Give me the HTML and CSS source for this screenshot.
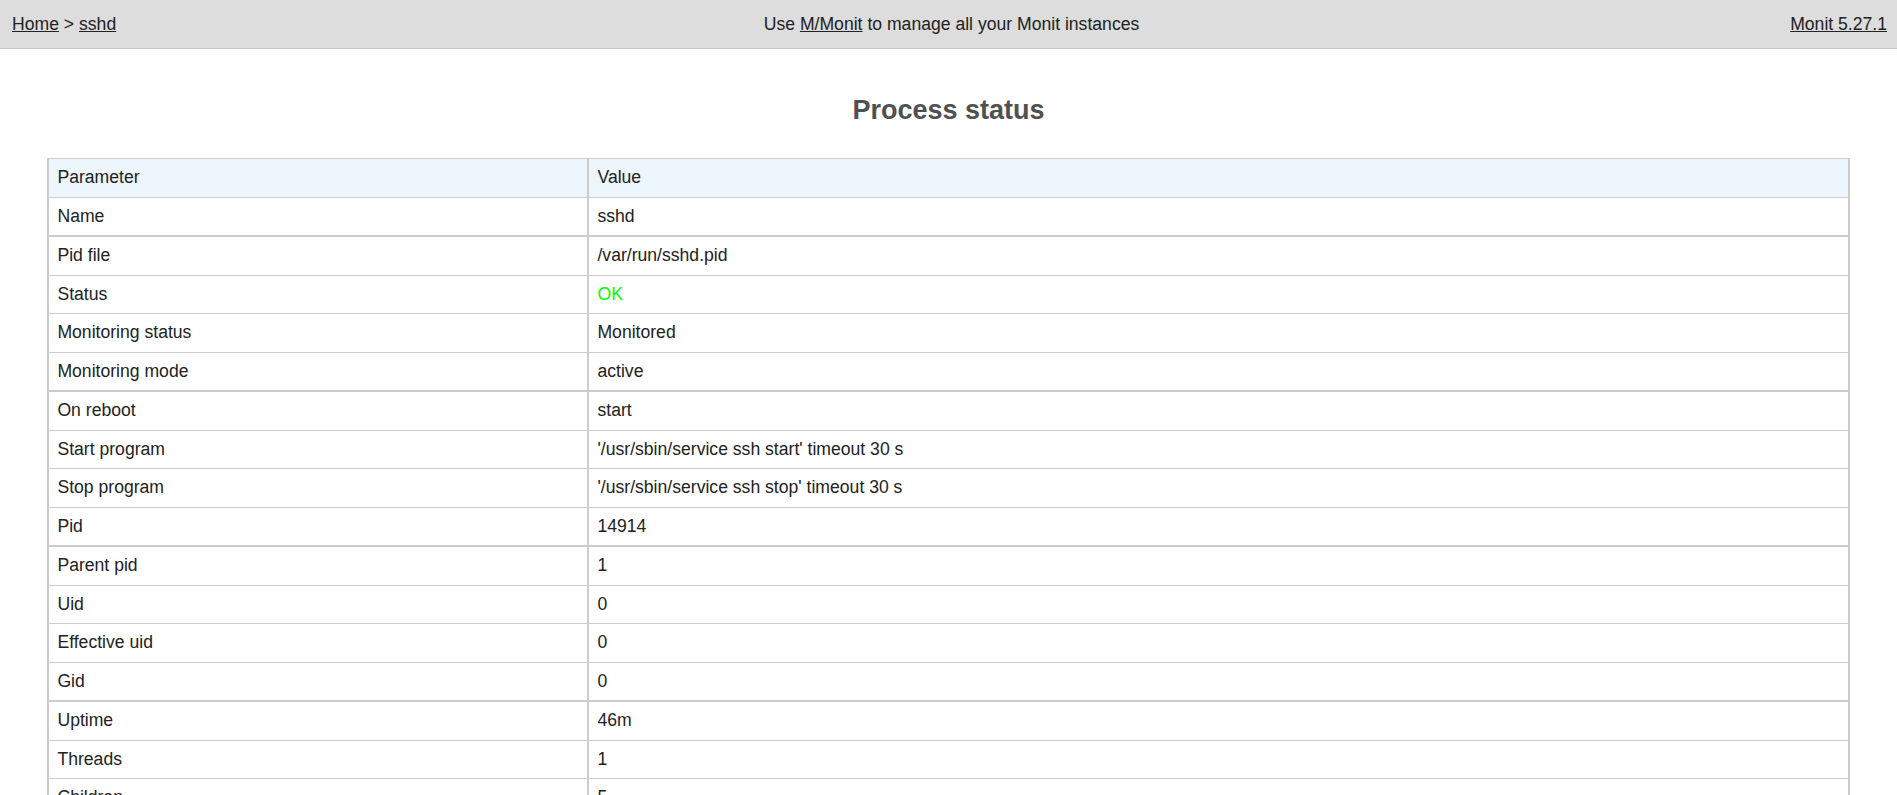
FILE: index.html
```html
<!DOCTYPE html>
<html lang="en">
<head>
    <meta charset="UTF-8">
    <meta name="viewport" content="width=device-width, initial-scale=1.0">
    <title>Monit: sshd</title>
    <link rel="stylesheet" href="styles.css">
</head>
<body>
    <div class="header">
        <div class="nav-left"><a href="#">Home</a> &gt; <a href="#">sshd</a></div>
        <div class="nav-center">Use <a href="#">M/Monit</a> to manage all your Monit instances</div>
        <div class="nav-right"><a href="#">Monit 5.27.1</a></div>
    </div>

    <h2 class="title">Process status</h2>

    <table class="status-table">
        <thead>
            <tr><th>Parameter</th><th>Value</th></tr>
        </thead>
        <tbody>
            <tr><td>Name</td><td>sshd</td></tr>
            <tr><td>Pid file</td><td>/var/run/sshd.pid</td></tr>
            <tr><td>Status</td><td class="green-text">OK</td></tr>
            <tr><td>Monitoring status</td><td>Monitored</td></tr>
            <tr><td>Monitoring mode</td><td>active</td></tr>
            <tr><td>On reboot</td><td>start</td></tr>
            <tr><td>Start program</td><td>'/usr/sbin/service ssh start' timeout 30 s</td></tr>
            <tr><td>Stop program</td><td>'/usr/sbin/service ssh stop' timeout 30 s</td></tr>
            <tr><td>Pid</td><td>14914</td></tr>
            <tr><td>Parent pid</td><td>1</td></tr>
            <tr><td>Uid</td><td>0</td></tr>
            <tr><td>Effective uid</td><td>0</td></tr>
            <tr><td>Gid</td><td>0</td></tr>
            <tr><td>Uptime</td><td>46m</td></tr>
            <tr><td>Threads</td><td>1</td></tr>
            <tr><td>Children</td><td>5</td></tr>
        </tbody>
    </table>
</body>
</html>
```

FILE: styles.css
```css
body {
    margin: 0;
    font-family: "Liberation Sans", Arial, sans-serif;
    font-size: 17.6px;
    color: #222;
    background-color: white;
}
a {
    color: #222;
    text-decoration: underline;
}
.header {
    display: grid;
    grid-template-columns: 1fr auto 1fr;
    align-items: center;
    height: 48px;
    padding: 0 10px 0 12px;
    background-color: #dddddd;
    border-bottom: 1px solid #cacaca;
}
.nav-center {
    padding-left: 4px;
}
.nav-right {
    text-align: right;
}
.title {
    margin: 46px 0 32px;
    font-size: 27px;
    line-height: 31px;
    text-align: center;
    color: #505050;
}
.status-table {
    width: 95%;
    margin: 0 auto;
    border-collapse: collapse;
    border-left: 2px solid #cccccc;
    border-right: 2px solid #cccccc;
}
.status-table th,
.status-table td {
    padding: 8px 8px;
    line-height: 21.5px;
    text-align: left;
    font-weight: normal;
    border: 1px solid #cccccc;
    border-left-width: 2px;
}
.status-table th {
    background-color: #edf5fd;
}
.status-table th:first-child,
.status-table td:first-child {
    width: 30%;
}
.status-table tbody tr:nth-child(4n+2) td {
    border-top-width: 2px;
}
.green-text {
    color: #00ff00;
}
```
